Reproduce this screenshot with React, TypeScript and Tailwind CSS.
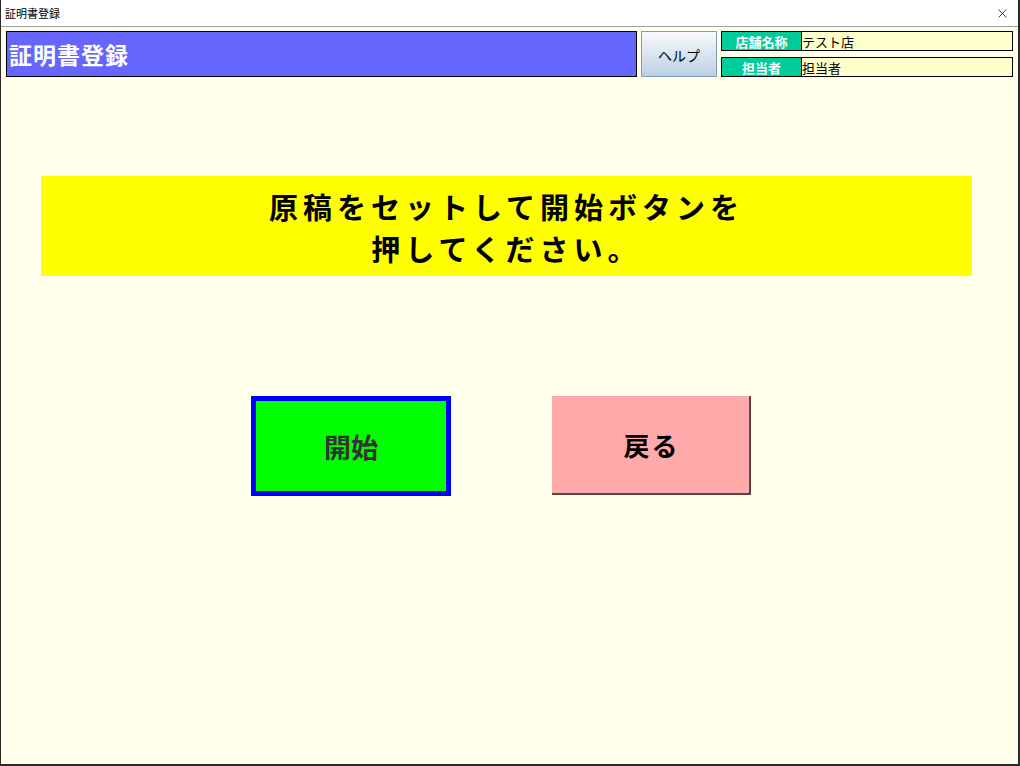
import { X } from "lucide-react";

const jp = { fontFamily: '"Noto Sans CJK JP", "Noto Sans", sans-serif' };

function TitleBar() {
  return (
    <div className="h-[27px] bg-white border-b border-[#a0a0a0] flex items-center justify-between pl-[4px] pr-[8px]">
      <span className="text-[11px] text-black leading-none">証明書登録</span>
      <X className="w-[15px] h-[15px] text-black" strokeWidth={1.2} />
    </div>
  );
}

function InfoRow({ label, value }: { label: string; value: string }) {
  return (
    <div className="flex h-[20px] border border-black">
      <div className="w-[80px] bg-[#00cc99] text-white font-bold text-[13px] flex items-center justify-center leading-none border-r border-black">
        {label}
      </div>
      <div className="flex-1 bg-[#ffffcc] text-black text-[13px] flex items-center leading-none">
        {value}
      </div>
    </div>
  );
}

function Header() {
  return (
    <div className="flex h-[46px] pl-[5px] gap-[4px]">
      <div className="w-[631px] bg-[#6666ff] border border-black flex items-center pl-[2px]">
        <span className="text-white font-bold text-[23px] leading-none tracking-[1px]">証明書登録</span>
      </div>
      <div className="w-[76px] border border-[#7f9db9] bg-gradient-to-b from-[#f8fafc] to-[#bcd0e4] flex items-center justify-center pt-[2px]">
        <span className="text-black text-[14px] leading-none">ヘルプ</span>
      </div>
      <div className="w-[292px] flex flex-col justify-between">
        <InfoRow label="店舗名称" value="テスト店" />
        <InfoRow label="担当者" value="担当者" />
      </div>
    </div>
  );
}

export default function App() {
  return (
    <div className="w-[1020px] h-[766px] flex flex-col border-l border-r-2 border-b-2 border-[#2a2a2a] overflow-hidden" style={jp}>
      <TitleBar />
      <div className="flex-1 bg-[#ffffec] pt-[4px]">
        <Header />

        <div className="ml-[40px] mt-[99px] w-[931px] h-[100px] bg-[#ffff00] flex flex-col items-center justify-center">
          <p className="text-black font-bold text-[29px] leading-[42px] tracking-[5px] text-center pt-[2px]">
            原稿をセットして開始ボタンを
            <br />
            押してください。
          </p>
        </div>

        <div className="flex mt-[120px] ml-[250px] gap-[101px]">
          <button className="w-[200px] h-[100px] bg-[#00ff00] border-[5px] border-[#0000ff] flex items-center justify-center">
            <span className="text-[#333333] font-bold text-[27px] leading-none">開始</span>
          </button>
          <button className="w-[199px] h-[99px] bg-[#ffaaaa] border-r-2 border-b-2 border-[#604040] flex items-center justify-center">
            <span className="text-black font-bold text-[26px] leading-none tracking-[2px] pl-[2px]">戻る</span>
          </button>
        </div>
      </div>
    </div>
  );
}
